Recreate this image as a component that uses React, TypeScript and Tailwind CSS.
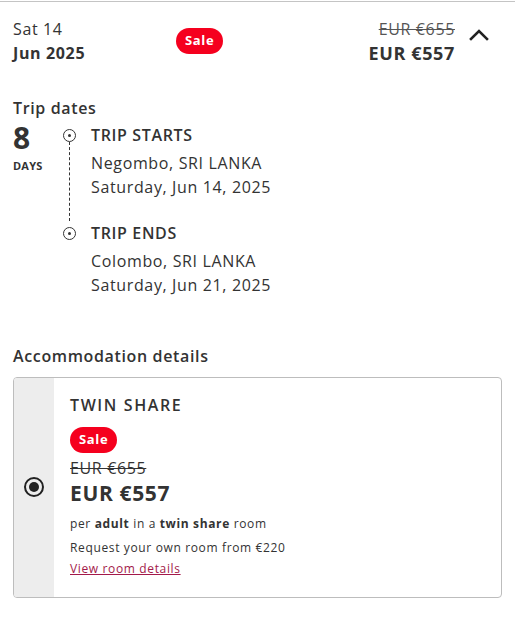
const font = { fontFamily: '"Open Sans", "Liberation Sans", sans-serif' };

function SaleBadge() {
  return (
    <span className="inline-flex h-[26px] items-center rounded-full bg-[#f5001e] px-[9px] text-[13px] font-bold text-white">
      Sale
    </span>
  );
}

function TimelineDot() {
  return (
    <span className="flex h-[13px] w-[13px] shrink-0 items-center justify-center rounded-full border-[1.5px] border-[#333]">
      <span className="h-[3px] w-[3px] rounded-full bg-[#333]" />
    </span>
  );
}

export default function App() {
  return (
    <div className="min-h-screen w-[515px] bg-white tracking-[0.04em] text-[#333]" style={font}>
      <div className="mt-px border-t border-[#c4c4c4]" />

      {/* Header row */}
      <div className="flex items-center pl-[13px] pt-[15px]">
        <div className="w-[163px] leading-[24px]">
          <div className="text-[16px]">Sat 14</div>
          <div className="text-[16px] font-bold">Jun 2025</div>
        </div>
        <SaleBadge />
        <div className="ml-auto text-right leading-[24px]">
          <div className="text-[16px] text-[#555] line-through">EUR €655</div>
          <div className="text-[18px] font-bold">EUR €557</div>
        </div>
        <svg viewBox="0 0 20 12" className="ml-[14px] mr-[26px] h-[12px] w-[20px] -translate-y-[6px]" fill="none">
          <path d="M2 10 10 2l8 8" stroke="#222" strokeWidth="2.6" strokeLinecap="square" />
        </svg>
      </div>

      {/* Trip dates */}
      <div className="px-[13px] pt-[32px]">
        <h2 className="text-[16px] font-semibold leading-[22px]">Trip dates</h2>
        <div className="mt-[4px] flex">
          <div className="flex w-[50px] flex-col">
            <span className="text-[30px] font-bold leading-[30px]">8</span>
            <span className="mt-[6px] text-[11px] font-bold leading-[13px] tracking-[0.02em]">DAYS</span>
          </div>
          <div className="flex flex-col">
            <div className="flex">
              <div className="flex w-[13px] flex-col items-center pt-[6px]">
                <TimelineDot />
                <span className="flex-1 border-l border-dashed border-[#333]" />
              </div>
              <div className="pb-[22px] pl-[15px]">
                <div className="text-[16px] font-semibold leading-[24px]">TRIP STARTS</div>
                <div className="mt-[4px] text-[16px] leading-[24px]">Negombo, SRI LANKA</div>
                <div className="text-[16px] leading-[24px]">Saturday, Jun 14, 2025</div>
              </div>
            </div>
            <div className="flex">
              <div className="flex w-[13px] flex-col items-center pt-[6px]">
                <TimelineDot />
              </div>
              <div className="pl-[15px]">
                <div className="text-[16px] font-semibold leading-[24px]">TRIP ENDS</div>
                <div className="mt-[4px] text-[16px] leading-[24px]">Colombo, SRI LANKA</div>
                <div className="text-[16px] leading-[24px]">Saturday, Jun 21, 2025</div>
              </div>
            </div>
          </div>
        </div>
      </div>

      {/* Accommodation */}
      <div className="px-[13px] pt-[48px]">
        <h2 className="text-[16px] font-semibold leading-[22px]">Accommodation details</h2>
        <div className="mt-[10px] flex overflow-hidden rounded-[4px] border border-[#bdbdbd]">
          <div className="flex w-[40px] items-center justify-center bg-[#ededed]">
            <span className="flex h-[20px] w-[20px] items-center justify-center rounded-full border-[2px] border-[#222]">
              <span className="h-[10px] w-[10px] rounded-full bg-[#222]" />
            </span>
          </div>
          <div className="flex-1 px-[16px] pb-[19px] pt-[16px]">
            <div className="text-[16px] font-semibold leading-[22px] tracking-[0.1em]">TWIN SHARE</div>
            <div className="mt-[10px]">
              <SaleBadge />
            </div>
            <div className="mt-[4px] text-[16px] leading-[22px] text-[#333] line-through">EUR €655</div>
            <div className="text-[21px] font-bold leading-[28px]">EUR €557</div>
            <div className="mt-[8px] text-[12px] leading-[18px]">
              per <b>adult</b> in a <b>twin share</b> room
            </div>
            <div className="mt-[6px] text-[12px] leading-[18px]">Request your own room from €220</div>
            <a href="#" className="mt-[3px] block text-[12px] leading-[18px] text-[#a3194a] underline">
              View room details
            </a>
          </div>
        </div>
      </div>
    </div>
  );
}
